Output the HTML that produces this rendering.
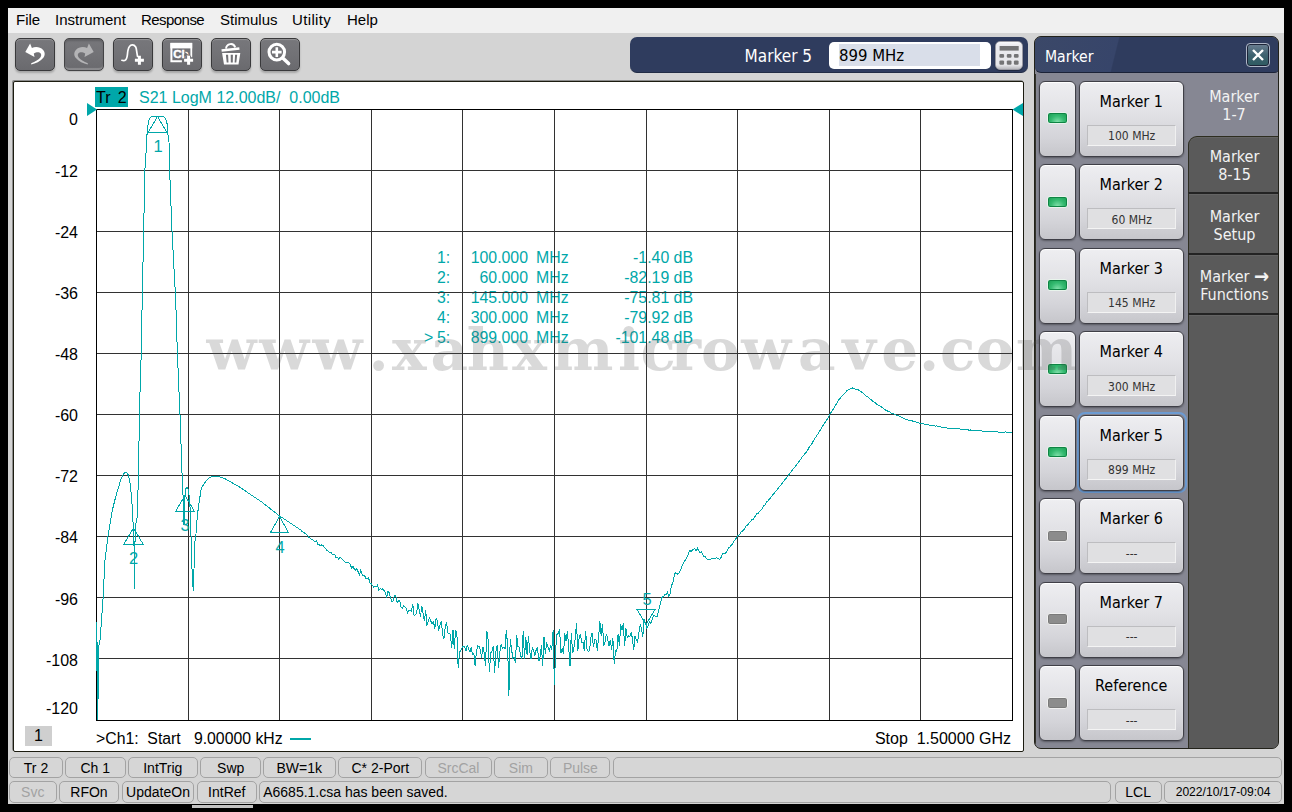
<!DOCTYPE html>
<html lang="en">
<head>
<meta charset="utf-8">
<title>Network Analyzer</title>
<style>
*{box-sizing:border-box;margin:0;padding:0}
html,body{width:1292px;height:812px;overflow:hidden;background:#000}
body{position:relative;font-family:"Liberation Sans",sans-serif;color:#000}
.abs{position:absolute}
#app{position:absolute;left:8px;top:8px;width:1276px;height:796px;background:#d4d4d4;overflow:hidden}
/* coordinates inside #app are page coords minus 8 */
#menubar{position:absolute;left:0;top:0;width:1276px;height:25px;background:#f0f0f0}
#menubar span{position:absolute;top:3px;font-size:15px;line-height:18px;white-space:nowrap;color:#000}
.tbtn{position:absolute;top:30.1px;width:40px;height:32.6px;border-radius:5px;border:1.7px solid #39393b;
 background:linear-gradient(#77777b 0%,#727276 50%,#6a6a6e 100%);
 box-shadow:0 2px 2px rgba(0,0,0,.22), inset 0 1px 1px rgba(255,255,255,.22)}
.tbtn.dis{border-color:#444446;box-shadow:0 1px 1px rgba(0,0,0,.12), inset 0 2px 2px rgba(0,0,0,.18), inset 0 -2px 1px rgba(255,255,255,.22)}
.tbtn svg{position:absolute;left:-1.5px;top:-1.6px}
#entry{position:absolute;left:622px;top:29px;width:398px;height:36px;border-radius:7px;background:#2f3c5e;border-bottom:1px solid #222c45}
#entry .lbl{position:absolute;left:0;width:182px;text-align:right;top:9px;font-size:17px;line-height:20px;color:#fff;font-family:"DejaVu Sans Condensed","Liberation Sans",sans-serif}
#entry .inp{position:absolute;left:199px;top:5px;width:162px;height:27px;border-radius:5px;background:#fff}
#entry .sel{position:absolute;left:10px;top:2px;width:141px;height:22px;background:#d9dee9}
#entry .inp span{position:absolute;left:10px;top:4px;font-size:16.6px;line-height:20px;color:#000;font-family:"DejaVu Sans Condensed","Liberation Sans",sans-serif}
#calc{position:absolute;left:365px;top:4px;width:28.3px;height:28.7px;border-radius:5px;background:linear-gradient(#fafafc 0%,#ebebef 12%,#e6e6ea 85%,#b9b9be 100%);border:1px solid #9a9aa3;box-shadow:0 1px 1px rgba(0,0,0,.35)}
#calc svg{position:absolute;left:-1px;top:-1px}
#plot{position:absolute;left:5px;top:73px;width:1011px;height:670.5px;background:#fff;border:1px solid #1c1c10;border-radius:2px;box-shadow:-1px -1px 0 #8c8c8c}
#plotsvg{position:absolute;left:-8px;top:-8px}
.ylab{position:absolute;left:20px;width:50px;text-align:right;font-size:16px;line-height:16px;color:#000}
.ttl{position:absolute;font-size:16px;line-height:18px;white-space:pre}
.ro{position:absolute;font-size:15.85px;line-height:20px;color:#00a7a9;white-space:pre}
.mk{position:absolute;z-index:4;font-size:16.5px;line-height:14px;color:#00a7a9;width:20px;text-align:center}
#wm{position:absolute;left:-8px;top:-8px;z-index:50;pointer-events:none;font-family:"DejaVu Serif","Liberation Serif",serif;font-weight:bold;font-size:58px;fill:rgba(80,80,80,.215)}
/* side panel */
#panel{position:absolute;left:1026px;top:28px;width:245px;height:713px;border-radius:7px;background:#595959;border:1px solid #22221a;overflow:hidden}
#phead{position:absolute;left:0;top:0;width:245px;height:35.5px;background:linear-gradient(104deg,#3b4868 0%,#37456a 33%,#2f3c5e 33.5%,#2f3c5e 100%);border-bottom:1px solid #1b2237;border-radius:0 0 6px 6px;z-index:3}
#phead span{position:absolute;left:10px;top:9.5px;color:#fff;font-size:15.6px;line-height:20px;font-family:"DejaVu Sans Condensed","Liberation Sans",sans-serif}
#pclose{position:absolute;left:211px;top:6px;width:24px;height:24px;border-radius:4px;border:1px solid #aeb6c6;background:linear-gradient(#6c7f92 0%,#3f6270 50%,#2d5a60 100%);box-shadow:inset 0 0 0 1px #1c2438}
#pbody{position:absolute;left:0;top:37px;width:153px;height:676px;background:#868793;box-shadow:inset 1px 0 0 #33332a}
#pbody:before{content:"";position:absolute;left:0;top:-10px;width:245px;height:10px;background:#868793}
.tog{position:absolute;left:4.3px;width:36.8px;height:76px;border-radius:6px;background:linear-gradient(#eeeef1 0%,#e2e2e6 40%,#d4d4d9 75%,#c6c6cb 100%);border:1.8px solid #3f3f47;box-shadow:0 1px 2px rgba(0,0,0,.35), inset 0 1px 1px #fff}
.led{position:absolute;left:6.5px;top:30.8px;width:21.4px;height:11.8px;border-radius:3px;border:1px solid #e8f4ec}
.led.on{background:radial-gradient(ellipse at 50% 95%,#86e2ae 0%,#34ba70 50%,#17994f 100%);box-shadow:inset 0 0 0 1px #0f8444}
.led.off{background:#8c8c8c;box-shadow:inset 0 0 0 1px #7a7a7a;border-color:#f0f0f0}
.mbtn{position:absolute;left:44.2px;width:105.3px;height:76px;border-radius:6px;background:linear-gradient(#eeeef1 0%,#e2e2e6 40%,#d4d4d9 75%,#c6c6cb 100%);border:1.8px solid #3f3f47;box-shadow:0 1px 2px rgba(0,0,0,.35), inset 0 1px 1px #fff}
.mbtn .t{position:absolute;left:0;top:10.4px;width:102px;text-align:center;font-size:16px;line-height:20px;color:#000;font-family:"DejaVu Sans Condensed","Liberation Sans",sans-serif}
.mbtn .v{position:absolute;left:7px;top:43px;width:89px;height:21px;border:1px solid #bdbdc0;border-bottom-color:#f4f4f4;border-right-color:#f0f0f0;background:#e0e0e2;text-align:center;font-size:12px;line-height:19px;padding-top:1.5px;color:#333;font-family:"DejaVu Sans Condensed","Liberation Sans",sans-serif}
.tab{position:absolute;left:153px;width:92px;text-align:center;color:#f2f2f2;font-size:16px;line-height:18px;font-family:"DejaVu Sans Condensed","Liberation Sans",sans-serif}
.tab.d{background:#5a5a5a;border-top:2px solid #232323;border-left:1px solid #2e2e22;box-shadow:inset 0 1px 0 #646464}
/* status */
.sb{position:absolute;height:21.4px;border:1px solid #a3a3a3;border-radius:5px;font-size:14px;line-height:20.6px;text-align:center;color:#000;white-space:nowrap;background:#d6d6d6}
.sb.g{color:#a2a2a2}
</style>
</head>
<body>
<div id="app">
 <div id="menubar">
  <span style="left:8px">File</span><span style="left:47px">Instrument</span><span style="left:133px;letter-spacing:-0.55px">Response</span><span style="left:212px">Stimulus</span><span style="left:284px;letter-spacing:.35px">Utility</span><span style="left:339px">Help</span>
 </div>
 <div class="tbtn" style="left:7.4px"><svg width="40" height="33" viewBox="0 0 40 33"><path d="M10.3 14.1 L15.1 5.6 L16.9 10 C20 8.5 25 8.5 28.1 11.9 C30.5 14.5 30 18 28.1 20 C25.5 23.5 20.5 25.5 16.2 26.4 L16.2 25.3 C20 24 24 21.5 25.5 19.3 C26.8 17 26.2 15 24.4 14.5 C22.5 14 20.5 14.6 18.8 15.6 L19.5 18.9 Z" fill="#fff"/></svg></div>
<div class="tbtn dis" style="left:56.3px"><svg width="40" height="33" viewBox="0 0 40 33"><g transform="translate(40,0) scale(-1,1)"><path d="M10.3 14.1 L15.1 5.6 L16.9 10 C20 8.5 25 8.5 28.1 11.9 C30.5 14.5 30 18 28.1 20 C25.5 23.5 20.5 25.5 16.2 26.4 L16.2 25.3 C20 24 24 21.5 25.5 19.3 C26.8 17 26.2 15 24.4 14.5 C22.5 14 20.5 14.6 18.8 15.6 L19.5 18.9 Z" fill="#b4b4b6"/></g></svg></div>
<div class="tbtn" style="left:105.2px"><svg width="40" height="33" viewBox="0 0 40 33"><path d="M8.9 22.3 C12.5 23.5 13.6 21 14.1 18.6 C14.6 16 14.5 14.5 14.9 12.6 C15.4 10 16 8.6 16.7 8.2 C17.8 6.6 20.8 6.2 22.7 8.9 C23.4 10.5 23.5 12 23.8 14.1 L24.5 18.4" stroke="#fff" stroke-width="1.7" fill="none" stroke-linecap="round"/><path d="M26.4 17.8 v9 M21.9 22.3 h9" stroke="#fff" stroke-width="3" fill="none"/></svg></div>
<div class="tbtn" style="left:154.1px"><svg width="40" height="33" viewBox="0 0 40 33"><path d="M8.4 4.8 h21.8 v5.6 h-21.8z" fill="#fff"/><path d="M9.4 5 v18.2 h10.5" stroke="#fff" stroke-width="2" fill="none"/><path d="M29.3 5 v14.3" stroke="#fff" stroke-width="1.8" fill="none"/><text x="11.2" y="20.1" font-family="Liberation Sans,sans-serif" font-weight="bold" font-size="11.6" fill="#fff" stroke="#fff" stroke-width="0.45">Ch</text><path d="M22.3 13.5 l4.2 3.6 l-4.2 1.4z" fill="#6f6f73"/><path d="M26.6 17.8 v9 M22.1 22.3 h9" stroke="#6f6f73" stroke-width="5" fill="none"/><path d="M26.6 17.8 v9 M22.1 22.3 h9" stroke="#fff" stroke-width="3" fill="none"/></svg></div>
<div class="tbtn" style="left:203.0px"><svg width="40" height="33" viewBox="0 0 40 33"><path d="M10.6 12.6 L28.4 10.4" stroke="#fff" stroke-width="2.5" fill="none"/><path d="M15 10.6 C15.5 5.5 22.5 4.2 24.2 9.4" stroke="#fff" stroke-width="1.9" fill="none"/><path d="M11.1 14.9 h18.2 l-1.8 11.5 h-14.5z" fill="#fff"/><path d="M14.9 16.7 h2.2 l0.4 7.8 h-1.8z M19.7 16.7 h2.2 l-0.1 7.8 h-2z M24.1 16.7 h2.1 l-0.9 7.8 h-1.7z" fill="#6f6f73"/></svg></div>
<div class="tbtn" style="left:251.9px"><svg width="40" height="33" viewBox="0 0 40 33"><circle cx="17.8" cy="14.1" r="7.8" stroke="#fff" stroke-width="3" fill="none"/><path d="M24.3 20.6 L29.6 25.6" stroke="#fff" stroke-width="3.5" stroke-linecap="round"/><path d="M17.8 9.3 v9.6 M13 14.1 h9.6" stroke="#fff" stroke-width="2.6"/></svg></div>
 <div id="entry"><div class="lbl">Marker 5</div><div class="inp"><div class="sel"></div><span>899 MHz</span></div><div id="calc"><svg width="29" height="29" viewBox="0 0 29 29"><rect x="4.6" y="5" width="19.1" height="4.6" fill="#747476"/><rect x="4.4" y="12.9" width="4.7" height="3.9" rx="1.2" fill="#747476"/><rect x="11.8" y="12.9" width="4.7" height="3.9" rx="1.2" fill="#747476"/><rect x="18.9" y="12.9" width="4.7" height="3.9" rx="1.2" fill="#747476"/><rect x="4.4" y="19.4" width="4.7" height="4.4" rx="1.2" fill="#747476"/><rect x="11.8" y="19.4" width="4.7" height="4.4" rx="1.2" fill="#747476"/><rect x="18.9" y="19.4" width="4.7" height="4.4" rx="1.2" fill="#747476"/></svg></div></div>
 <div id="plot">
  
 </div>
 <div id="panel">
  <div id="phead"><span>Marker</span><div id="pclose"><svg width="22" height="22" viewBox="0 0 22 22"><path d="M6 6 L16 16 M16 6 L6 16" stroke="#fff" stroke-width="2.4" fill="none"/></svg></div></div>
  <div id="pbody">
  <div class="tog" style="top:6.6px"><div class="led on"></div></div>
<div class="mbtn" style="top:6.6px"><div class="t">Marker 1</div><div class="v">100 MHz</div></div>
<div class="tog" style="top:90.1px"><div class="led on"></div></div>
<div class="mbtn" style="top:90.1px"><div class="t">Marker 2</div><div class="v">60 MHz</div></div>
<div class="tog" style="top:173.6px"><div class="led on"></div></div>
<div class="mbtn" style="top:173.6px"><div class="t">Marker 3</div><div class="v">145 MHz</div></div>
<div class="tog" style="top:257.1px"><div class="led on"></div></div>
<div class="mbtn" style="top:257.1px"><div class="t">Marker 4</div><div class="v">300 MHz</div></div>
<div class="abs" style="left:42px;top:337.6px;width:109.7px;height:81.6px;border:2px solid #6c9bd2;border-radius:8px"></div>
<div class="tog" style="top:340.6px"><div class="led on"></div></div>
<div class="mbtn" style="top:340.6px"><div class="t">Marker 5</div><div class="v">899 MHz</div></div>
<div class="tog" style="top:424.1px"><div class="led off"></div></div>
<div class="mbtn" style="top:424.1px"><div class="t">Marker 6</div><div class="v">---</div></div>
<div class="tog" style="top:507.6px"><div class="led off"></div></div>
<div class="mbtn" style="top:507.6px"><div class="t">Marker 7</div><div class="v">---</div></div>
<div class="tog" style="top:591.1px"><div class="led off"></div></div>
<div class="mbtn" style="top:591.1px"><div class="t">Reference</div><div class="v">---</div></div>
  </div>
  <div class="tab" style="top:36px;height:80px;background:#868793;padding-top:15px">Marker<br>1-7</div>
<div class="tab d" style="top:99.3px;height:58px;border-top:1px solid #2e2e20;border-top-left-radius:9px;padding-top:11px">Marker<br>8-15</div>
<div class="tab d" style="top:155.3px;height:62px;padding-top:13.6px">Marker<br>Setup</div>
<div class="tab d" style="top:215.6px;height:62px;padding-top:13.8px">Marker <span style="font-size:20px;line-height:10px;font-weight:bold;position:relative;top:1px">&#8594;</span><br>Functions</div>
<div class="tab d" style="top:276.4px;height:440px"></div>
 </div>
 <div class="sb" style="left:1px;top:749px;height:21px;line-height:20.6px;width:54px">Tr 2</div>
<div class="sb" style="left:57px;top:749px;height:21px;line-height:20.6px;width:60.599999999999994px">Ch 1</div>
<div class="sb" style="left:120px;top:749px;height:21px;line-height:20.6px;width:69.6px">IntTrig</div>
<div class="sb" style="left:192.4px;top:749px;height:21px;line-height:20.6px;width:60.599999999999994px">Swp</div>
<div class="sb" style="left:255px;top:749px;height:21px;line-height:20.6px;width:72.60000000000002px">BW=1k</div>
<div class="sb" style="left:330.3px;top:749px;height:21px;line-height:20.6px;width:84.0px">C* 2-Port</div>
<div class="sb g" style="left:417px;top:749px;height:21px;line-height:20.6px;width:66.80000000000001px">SrcCal</div>
<div class="sb g" style="left:486px;top:749px;height:21px;line-height:20.6px;width:53.799999999999955px">Sim</div>
<div class="sb g" style="left:542.4px;top:749px;height:21px;line-height:20.6px;width:60.0px">Pulse</div>
<div class="sb" style="left:605px;top:749px;height:21px;line-height:20.6px;width:668.8px"></div>
<div class="sb g" style="left:1px;top:773px;height:22px;width:47.5px">Svc</div>
<div class="sb" style="left:51.3px;top:773px;height:22px;width:59.3px">RFOn</div>
<div class="sb" style="left:113.7px;top:773px;height:22px;width:72.7px">UpdateOn</div>
<div class="sb" style="left:188.8px;top:773px;height:22px;width:60.0px">IntRef</div>
<div class="sb" style="left:251.2px;top:773px;height:22px;width:852.3px;text-align:left;padding-left:3px">A6685.1.csa has been saved.</div>
<div class="sb" style="left:1106.6px;top:773px;height:22px;width:47.0px">LCL</div>
<div class="sb" style="left:1156.4px;top:773px;height:22px;width:117.39999999999986px;font-size:12.1px">2022/10/17-09:04</div>
 <div id="pc" class="abs" style="left:-8px;top:-8px;width:1292px;height:812px">
<svg id="plotsvg" class="abs" style="left:0;top:0;z-index:2" width="1292" height="812" viewBox="0 0 1292 812">
<g shape-rendering="crispEdges" stroke="#323232" stroke-width="1" fill="none">
<line x1="188.5" y1="109" x2="188.5" y2="720"/>
<line x1="279.5" y1="109" x2="279.5" y2="720"/>
<line x1="371.5" y1="109" x2="371.5" y2="720"/>
<line x1="462.5" y1="109" x2="462.5" y2="720"/>
<line x1="554.5" y1="109" x2="554.5" y2="720"/>
<line x1="646.5" y1="109" x2="646.5" y2="720"/>
<line x1="737.5" y1="109" x2="737.5" y2="720"/>
<line x1="829.5" y1="109" x2="829.5" y2="720"/>
<line x1="920.5" y1="109" x2="920.5" y2="720"/>
<line x1="96" y1="170.5" x2="1013" y2="170.5"/>
<line x1="96" y1="231.5" x2="1013" y2="231.5"/>
<line x1="96" y1="292.5" x2="1013" y2="292.5"/>
<line x1="96" y1="353.5" x2="1013" y2="353.5"/>
<line x1="96" y1="414.5" x2="1013" y2="414.5"/>
<line x1="96" y1="475.5" x2="1013" y2="475.5"/>
<line x1="96" y1="536.5" x2="1013" y2="536.5"/>
<line x1="96" y1="597.5" x2="1013" y2="597.5"/>
<line x1="96" y1="658.5" x2="1013" y2="658.5"/>
<rect x="96.5" y="109.5" width="916" height="611" stroke="#000"/>
</g>
</svg>
<svg id="tracesvg" class="abs" style="left:0;top:0;z-index:3" width="1292" height="812" viewBox="0 0 1292 812">
<g shape-rendering="crispEdges" stroke="#00a7a9" stroke-width="1" fill="none">
<polyline points="97.5,720 97.5,672 96.5,670 96.5,622 98.5,699 98.5,648 100,640 101.2,625 102.4,607 103.4,594 104.7,563 108,536 112.4,510 115.9,496 121,479 123.5,474 125.9,472 128,474.5 129.7,480.7 131,492 132.2,506.6 133.4,529 134.5,560 134.5,589 135.2,525.5 136.5,521 137.4,515 137.8,500 138.3,477 138.8,460 139.3,415 141.2,354 142.2,300 143.7,231 144.7,174 145.5,158 146.3,150 146.5,137 147.4,132.7 147.7,127 148.8,120 150.7,117.3 152.2,116.5 161.8,116.5 164.7,117.3 166.6,121.3 167.7,127.2 168,134.6 168.8,137 169.5,155 169.6,170 172,231 175.7,300 177.4,354 180,415 181.9,470 182.8,490 183.5,508 184,525 184.6,500 185.5,490 186.4,487.4 187.5,488 188.6,490.7 189.4,499.6 190.5,512 191.4,553.5 192.5,581 193.4,590.7 194,569 194.6,544.6 196,533.8 197,520 197.9,511.4 199,503 200,496.6 201.2,488.5 204,483.7 207.9,478.9 210.8,477 215,476 219.7,477 224.6,478.5 239.4,487 261.6,501.9 278.8,515.4 300,529.5 300.9,530.1 302.2,531.6 303.5,532.2 304.8,533.2 306.1,533.8 307.4,535.4 308.7,537.3 310,537.8 311.3,539.3 312.6,539.6 313.9,540.7 315.2,541.6 316.5,541 317.8,544.1 319.1,544.8 320.4,545.8 321.7,544.7 323,545.6 324.3,547.4 325.6,548.7 326.9,550.5 328.2,551.1 329.5,552.5 330.8,552.1 332.1,553.9 333.4,554.8 334.7,554.4 336,557.9 337.3,557.4 338.6,559 339.9,557.6 341.2,558.3 342.5,559.6 343.8,560.7 345.1,562.4 346.4,562.7 347.7,562.6 349,562.9 350.3,564.5 351.6,568.1 352.9,566.2 354.2,568.8 355.5,570.2 356.8,568.2 358.1,571.7 359.4,574.8 360.7,570.4 362,574.3 363.3,575.7 364.6,575.5 365.9,578.9 367.2,579 368.5,577.4 369.8,582.8 371.1,583.5 372.4,585.2 373.7,587.2 375,586.2 376.3,586.8 377.6,585 378.9,590 380.2,588.5 381.5,589.7 382.8,588.9 384.1,590.5 385.4,592.4 386.7,597.5 388,590.8 389.3,593 390.6,598 391.9,601.9 393.2,600.7 394.5,595.3 395.8,595.4 397.1,602.9 398.4,600.9 399.7,600.8 401,607.2 402.3,608.2 403.6,606.1 404.9,607 406.2,608.2 407.5,612.8 408.8,610.1 410.1,610.4 411.4,611.2 412.7,603.7 414,615.4 415.3,614.8 416.6,613.7 417.9,603.5 419.2,609.8 420.5,617.1 421.8,605.6 423.1,614 424.4,620.6 425.7,609.8 427,625.5 428.3,620.9 429.6,617.9 430.9,621.3 432.2,624 433.5,621.8 434.8,628.6 436.1,618.7 437.4,620.9 438.7,630.7 440,625.2 441.3,620.7 442.6,634.2 443.9,639.3 445.2,627.6 446.5,622.3 447.8,632.6 449.1,633.9 450.4,634 451.7,648 453,630 454.3,649 455.6,629.6 456.9,634.3 458.2,668.4 459.5,652.2 460.8,650.9 462.1,647.4 463.4,646.3 464.7,646.8 466,650.8 467.3,644.7 468.6,649 469.9,652 471.2,647.4 472.5,654.4 473.8,653.1 475.1,665.9 476.4,651.7 477.7,645.6 479,646.5 480.3,649.9 481.6,657.9 482.9,647 484.2,653.1 485.5,665.6 486.8,630.7 488.1,639.9 489.4,672 490.7,652.9 492,651.5 493.3,645.6 494.6,673 495.9,651.6 497.2,644.6 498.5,668 499.8,652.1 501.1,644.3 502.4,648.3 503.7,647.2 505,648.7 506.3,630.3 507.6,645.2 508.9,695.6 510.2,639.4 511.5,649 512.8,657.9 514.1,657.1 515.4,662.6 516.7,635.2 518,646.9 519.3,647 520.6,655.3 521.9,659.2 523.2,630.7 524.5,658.9 525.8,636.9 527.1,655.2 528.4,636.3 529.7,650.5 531,659.2 532.3,647.5 533.6,650.3 534.9,655.4 536.2,649.6 537.5,647.5 538.8,661.3 540.1,657 541.4,645 542.7,666.1 544,636.8 545.3,654.1 546.6,643.5 547.9,646.5 549.2,651 550.5,646.4 551.8,649.6 553.1,630.5 554.4,685 555.7,648.2 557,634.4 558.3,633.6 559.6,629.6 560.9,653 562.2,648.3 563.5,654.3 564.8,633.4 566.1,641.2 567.4,631.3 568.7,647.3 570,666.4 571.3,632.9 572.6,653.4 573.9,648.3 575.2,638.3 576.5,623 577.8,651.1 579.1,638.3 580.4,634 581.7,642.3 583,642.4 584.3,651.4 585.6,630.6 586.9,648.4 588.2,651.2 589.5,650.9 590.8,637.5 592.1,632.9 593.4,647.3 594.7,639.9 596,640 597.3,650.5 598.6,636.9 599.9,621.3 601.2,635.9 602.5,624.1 603.8,645.6 605.1,641.5 606.4,634.1 607.7,638.9 609,645.6 610.3,639.6 611.6,649.5 612.9,638.5 614.2,664 615.5,650.7 616.8,651.6 618.1,633.8 619.4,645.9 620.7,624.3 622,630.2 623.3,623.2 624.6,646.3 625.9,628.3 627.2,637.5 628.5,635.8 629.8,636.8 631.1,632.3 632.4,638.3 633.7,649.9 635,636.3 636.3,639.4 637.6,642.4 638.9,632.7 640.2,624.3 641.5,628.3 642.8,636.6 644.1,618.7 645.4,622.8 646.7,628.1 648,625.7 649.3,621.9 650.6,623.5 651.9,620.4 653.2,616.4 654.5,615.3 655.8,616.7 657.1,616.8 658.4,611.4 659.7,606.9 661,600.6 662.3,596.6 663.6,596.8 664.9,594 666.2,594.3 667.5,592.3 668.8,596.7 670.1,593.5 671.4,585.6 672.7,583.2 674,577.3 675.3,572.5 676.6,573.5 677.9,574.3 679.2,572.9 680.5,570.4 681.8,566.8 683.1,564.1 684.4,561.4 685.7,559.9 687,556.8 688.3,554.4 689.6,550.5 690.9,551.3 692.2,550.6 693.5,549.1 694.8,548.9 696.1,550.8 697.4,548.2 698.7,550.8 700,553 701.3,551.5 702.6,554.2 703.9,556.6 705.2,556.6 706.5,558.4 707.8,559.9 709.1,559.8 710.4,559.4 711.7,558.2 713,558.7 714.3,558.2 715.6,558.2 716.9,557.8 718.2,558.4 719.5,559.2 720.8,558.1 722.1,554.4 723.4,553.4 724.7,554 726,552.4 727.3,550.5 728.6,547.3 729.9,547 731.2,545.2 732.5,544 733.8,541.6 735.1,539.6 736.4,538.2 737.7,535.3 739,535.2 740.3,533.3 741.6,531.4 742.9,530.8 744.2,529.5 745.5,526.6 746.8,525.5 748.1,524.4 749.4,522.8 750.7,521.1 752,519.4 753.3,519.1 754.6,517.2 755.9,514.9 757.2,513.3 758.5,513 759.8,511.2 761.1,510 762.4,508.1 763.7,506 765,504.8 766.3,502.3 767.6,501.2 768.9,499.8 770.2,498.4 771.5,496.3 772.8,494.9 774.1,493.4 775.4,491.8 776.7,490.2 778,488.5 779.3,486.7 780.6,485.4 781.9,483.6 783.2,481.7 784.5,480.1 785.8,478.7 787.1,477 788.4,475.4 789.7,473.7 791,472 792.3,470.2 793.6,468.3 794.9,467 796.2,465.4 797.5,463.6 798.8,461.7 800.1,460.2 801.4,458.2 802.7,456.3 804,455 805.3,453.1 806.6,451.7 807.9,449.6 809.2,447.3 810.5,445.5 811.8,443.9 813.1,441.4 814.4,439.1 815.7,437.2 817,435.3 818.3,433.2 819.6,431.1 820.9,429.2 822.2,427 823.5,424.7 824.8,422.8 826.1,420.9 827.4,418.7 828.7,416.6 830,414.1 831.3,412.2 832.6,410.2 833.9,407.9 835.2,406 836.5,403.8 837.8,401.7 839.1,399.4 840.4,398 841.7,396.4 843,394.8 844.3,393.4 845.6,392.3 846.9,390.5 848.2,389.9 849.5,389.3 850.8,388.6 852.1,387.8 853.4,388.4 854.7,388.9 856,389.4 857.3,389.7 858.6,390 859.9,390.8 861.2,391.8 862.5,392.8 863.8,393.9 865.1,394.9 866.4,396.2 867.7,396.9 869,398.1 870.3,399.3 871.6,400.1 872.9,401.4 874.2,402 875.5,403.1 876.8,404.2 878.1,405 879.4,405.8 880.7,406.6 882,407.2 883.3,408.6 884.6,409.3 885.9,410.2 887.2,410.7 888.5,411.7 889.8,412 891.1,413.1 892.4,413.7 893.7,413.8 895,414.7 896.3,415.3 897.6,415.5 898.9,416.1 900.2,416.8 901.5,417.4 902.8,417.9 904.1,418.7 905.4,419.2 906.7,419.6 908,420 909.3,420.5 910.6,420.8 911.9,420.8 913.2,421.3 914.5,421.6 915.8,421.9 917.1,422.5 918.4,422.9 919.7,423.3 921,423.3 922.3,423.6 923.6,424 924.9,424.2 926.2,424.5 927.5,424.7 928.8,424.8 930.1,425.3 931.4,425.5 932.7,425.7 934,425.8 935.3,426.1 936.6,426 937.9,426.4 939.2,426.8 940.5,426.8 941.8,427.3 943.1,427.6 944.4,427.5 945.7,427.9 947,428 948.3,428.2 949.6,428.3 950.9,428.4 952.2,428.3 953.5,428.6 954.8,428.7 956.1,428.9 957.4,429 958.7,428.9 960,429 961.3,429.2 962.6,429.3 963.9,429.3 965.2,429.6 966.5,429.7 967.8,429.9 969.1,430.1 970.4,430 971.7,430.5 973,430.2 974.3,430.5 975.6,430.5 976.9,430.7 978.2,430.3 979.5,430.6 980.8,430.9 982.1,431 983.4,431.4 984.7,431.2 986,431.4 987.3,431.4 988.6,431.5 989.9,431.6 991.2,431.5 992.5,431.7 993.8,431.6 995.1,432 996.4,431.8 997.7,432 999,432.4 1000.3,432 1001.6,432.1 1002.9,432.3 1004.2,432.1 1005.5,432 1006.8,432.2 1008.1,432.3 1009.4,432.4 1010.7,432.2 1011.9,432.3"/>
<polygon points="157.5,116.5 148.0,132.5 167.0,132.5"/>
<polygon points="133.5,528 124.0,544 143.0,544"/>
<polygon points="185,495.5 175.5,511.5 194.5,511.5"/>
<polygon points="279.5,516.5 270.5,532.5 288.5,532.5"/>
<polygon points="646,624.5 637.0,609.5 655.0,609.5"/>
<line x1="289.5" y1="738.5" x2="311" y2="738.5" stroke-width="2"/>
</g>
<polygon points="87,103 97,109.5 87,116" fill="#00a7a9"/>
<polygon points="1023,103 1012.5,109.5 1023,116" fill="#00a7a9"/>
</svg>
<div class="ylab" style="left:28px;top:112px">0</div>
<div class="ylab" style="left:28px;top:163.5px">-12</div>
<div class="ylab" style="left:28px;top:224.7px">-24</div>
<div class="ylab" style="left:28px;top:285.8px">-36</div>
<div class="ylab" style="left:28px;top:347.0px">-48</div>
<div class="ylab" style="left:28px;top:408.1px">-60</div>
<div class="ylab" style="left:28px;top:469.2px">-72</div>
<div class="ylab" style="left:28px;top:530.4px">-84</div>
<div class="ylab" style="left:28px;top:591.5px">-96</div>
<div class="ylab" style="left:28px;top:652.7px">-108</div>
<div class="ylab" style="left:28px;top:701px">-120</div>
<div class="abs" style="left:95px;top:87px;width:33px;height:20px;background:#00a7a9"></div>
<div class="ttl" style="left:96px;top:89px;color:#000;word-spacing:-0.8px">Tr  2</div>
<div class="ttl" style="left:139px;top:89px;color:#00a7a9">S21 LogM 12.00dB/  0.00dB</div>
<div class="ro" style="left:437px;top:248px">1:</div>
<div class="ro" style="left:428px;width:100px;text-align:right;top:248px">100.000</div>
<div class="ro" style="left:536px;top:248px">MHz</div>
<div class="ro" style="left:572px;width:121px;text-align:right;top:248px">-1.40 dB</div>
<div class="ro" style="left:437px;top:268px">2:</div>
<div class="ro" style="left:428px;width:100px;text-align:right;top:268px">60.000</div>
<div class="ro" style="left:536px;top:268px">MHz</div>
<div class="ro" style="left:572px;width:121px;text-align:right;top:268px">-82.19 dB</div>
<div class="ro" style="left:437px;top:288px">3:</div>
<div class="ro" style="left:428px;width:100px;text-align:right;top:288px">145.000</div>
<div class="ro" style="left:536px;top:288px">MHz</div>
<div class="ro" style="left:572px;width:121px;text-align:right;top:288px">-75.81 dB</div>
<div class="ro" style="left:437px;top:308px">4:</div>
<div class="ro" style="left:428px;width:100px;text-align:right;top:308px">300.000</div>
<div class="ro" style="left:536px;top:308px">MHz</div>
<div class="ro" style="left:572px;width:121px;text-align:right;top:308px">-79.92 dB</div>
<div class="ro" style="left:424px;top:328px">&gt;</div>
<div class="ro" style="left:437px;top:328px">5:</div>
<div class="ro" style="left:428px;width:100px;text-align:right;top:328px">899.000</div>
<div class="ro" style="left:536px;top:328px">MHz</div>
<div class="ro" style="left:572px;width:121px;text-align:right;top:328px">-101.48 dB</div>
<div class="mk" style="left:148px;top:139px">1</div>
<div class="mk" style="left:123.5px;top:551px">2</div>
<div class="mk" style="left:175px;top:518px">3</div>
<div class="mk" style="left:270px;top:540px">4</div>
<div class="mk" style="left:637px;top:592px">5</div>
<div class="abs" style="left:25px;top:726px;width:27px;height:20px;background:#cfcfcf;text-align:center;font-size:16px;line-height:20px">1</div>
<div class="ttl" style="left:96px;top:730px;color:#000;font-size:15.8px">&gt;Ch1:  Start   9.00000 kHz</div>
<div class="ttl" style="left:800px;width:211px;text-align:right;top:730px;color:#000">Stop  1.50000 GHz</div>
</div>
 <svg id="wm" width="1292" height="812" viewBox="0 0 1292 812"><text y="370" x="206.4 259.2 312.6 368.5 392.0 430.6 466.8 512.2 552.0 618.0 640.4 670.4 701.1 741.3 798.0 842.3 881.2 919.0 940.0 975.7 1015.7">www.xahxmicrowave.com</text></svg>
</div>
<div style="position:absolute;left:192px;top:805px;width:61px;height:3px;background:#c2c2c2"></div>
</body>
</html>
